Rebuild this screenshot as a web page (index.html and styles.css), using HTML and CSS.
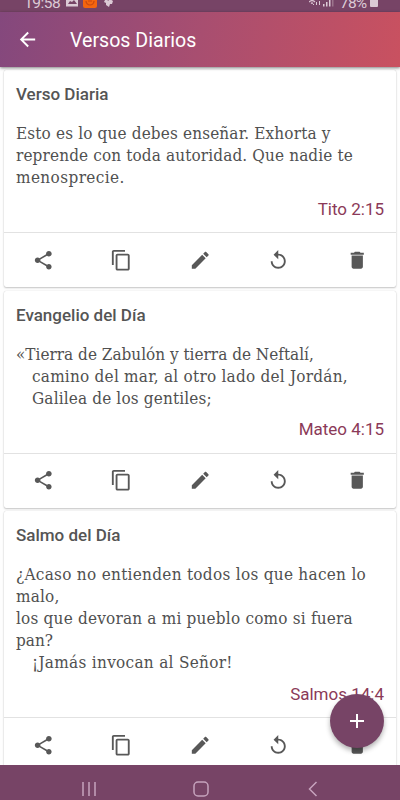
FILE: index.html
```html
<!DOCTYPE html>
<html lang="es">
<head>
<meta charset="utf-8">
<title>Versos Diarios</title>
<link rel="stylesheet" href="styles.css">
</head>
<body>
<svg class="defs" aria-hidden="true">
  <symbol id="share" viewBox="0 0 24 24"><path d="M18 16.08c-.76 0-1.44.3-1.96.77L8.91 12.7c.05-.23.09-.46.09-.7s-.04-.47-.09-.7l7.05-4.11c.54.5 1.25.81 2.04.81 1.66 0 3-1.34 3-3s-1.34-3-3-3-3 1.34-3 3c0 .24.04.47.09.7L8.04 9.81C7.5 9.31 6.79 9 6 9c-1.66 0-3 1.34-3 3s1.34 3 3 3c.79 0 1.5-.31 2.04-.81l7.12 4.16c-.05.21-.08.43-.08.65 0 1.61 1.31 2.92 2.92 2.92s2.92-1.31 2.92-2.92-1.31-2.92-2.92-2.92z"/></symbol>
  <symbol id="copy" viewBox="0 0 24 24"><path d="M16 1H4c-1.1 0-2 .9-2 2v14h2V3h12V1zm3 4H8c-1.1 0-2 .9-2 2v14c0 1.1.9 2 2 2h11c1.1 0 2-.9 2-2V7c0-1.1-.9-2-2-2zm0 16H8V7h11v14z"/></symbol>
  <symbol id="edit" viewBox="0 0 24 24"><path d="M3 17.25V21h3.75L17.81 9.94l-3.75-3.75L3 17.25zM20.71 7.04c.39-.39.39-1.02 0-1.41l-2.34-2.34c-.39-.39-1.02-.39-1.41 0l-1.83 1.83 3.75 3.75 1.83-1.83z"/></symbol>
  <symbol id="replay" viewBox="0 0 24 24"><path d="M12 5V1L7 6l5 5V7c3.31 0 6 2.69 6 6s-2.69 6-6 6-6-2.69-6-6H4c0 4.42 3.58 8 8 8s8-3.58 8-8-3.58-8-8-8z"/></symbol>
  <symbol id="trash" viewBox="0 0 24 24"><path d="M6 19c0 1.1.9 2 2 2h8c1.1 0 2-.9 2-2V7H6v12zM19 4h-3.5l-1-1h-5l-1 1H5v2h14V4z"/></symbol>
</svg>
<div class="screen">
  <div class="status">
    <span class="clock">19:58</span>
    <svg class="status-left" viewBox="0 0 50 12"><path class="lit" fill-rule="evenodd" d="M1-5h12V6.500H1zM3 4h9L9 0 7 2 5 1z"/><rect x="18" y="-6" width="14" height="14" rx="2" fill="#f4650f"/><path d="M21 1a4 4 0 0 0 8 0M23 1h4" fill="none" stroke="#c84812" stroke-width="1.200"/><path class="lit" d="M40 0l2-1 1 2 2-2 3 2-1 3-2 0-1 3-3-2 0-2-2-1z"/></svg>
    <svg class="status-right" viewBox="0 0 28 12"><path d="M0 2q3-3 6 0M2 3.500q1-1 2 0" fill="none" stroke="#d9c3d1" stroke-width="1.200"/><path class="lit" d="M4 4h1v1H4zM7 2h1v3H7zM10 1h1v4h-1zM14 4h1.500v2.500H14zM17 2h1.500v4.500H17zM20 0h1.500v6.500H20z"/><path d="M23-2h1.500v8.500H23z" fill="#9c748c"/></svg>
    <span class="percent">78%</span>
    <span class="battery"></span>
  </div>
  <header class="appbar">
    <svg class="back" viewBox="0 0 24 24"><path d="M20 11H7.830l5.590-5.590L12 4l-8 8 8 8 1.410-1.410L7.830 13H20v-2z"/></svg>
    <h1>Versos Diarios</h1>
  </header>
  <main class="list">
    <article class="card">
      <div class="content">
        <h2>Verso Diaria</h2>
        <div class="verse">
          <p class="line a1">Esto es lo que debes enseñar. Exhorta y</p>
          <p class="line a2">reprende con toda autoridad. Que nadie te</p>
          <p class="line a3">menosprecie.</p>
        </div>
        <div class="ref">Tito 2:15</div>
      </div>
      <div class="actions"><svg><use href="#share"/></svg><svg><use href="#copy"/></svg><svg><use href="#edit"/></svg><svg><use href="#replay"/></svg><svg><use href="#trash"/></svg></div>
    </article>
    <article class="card">
      <div class="content">
        <h2>Evangelio del Día</h2>
        <div class="verse">
          <p class="line b1">«Tierra de Zabulón y tierra de Neftalí,</p>
          <p class="line indent b2">camino del mar, al otro lado del Jordán,</p>
          <p class="line indent b3">Galilea de los gentiles;</p>
        </div>
        <div class="ref">Mateo 4:15</div>
      </div>
      <div class="actions"><svg><use href="#share"/></svg><svg><use href="#copy"/></svg><svg><use href="#edit"/></svg><svg><use href="#replay"/></svg><svg><use href="#trash"/></svg></div>
    </article>
    <article class="card">
      <div class="content">
        <h2>Salmo del Día</h2>
        <div class="verse">
          <p class="line c1">¿Acaso no entienden todos los que hacen lo</p>
          <p class="line c2">malo,</p>
          <p class="line c3">los que devoran a mi pueblo como si fuera</p>
          <p class="line c4">pan?</p>
          <p class="line indent c5">¡Jamás invocan al Señor!</p>
        </div>
        <div class="ref">Salmos 14:4</div>
      </div>
      <div class="actions"><svg><use href="#share"/></svg><svg><use href="#copy"/></svg><svg><use href="#edit"/></svg><svg><use href="#replay"/></svg><svg><use href="#trash"/></svg></div>
    </article>
  </main>
  <nav class="navbar">
    <svg viewBox="0 0 18 18"><path d="M3 2v14M9 2v14M15 2v14"/></svg>
    <svg viewBox="0 0 18 18"><rect x="2" y="2" width="14" height="14" rx="4"/></svg>
    <svg viewBox="0 0 18 18"><path d="M12.500 2L5.500 9l7 7"/></svg>
  </nav>
  <button class="fab" aria-label="Añadir"><svg viewBox="0 0 24 24"><path d="M19 13h-6v6h-2v-6H5v-2h6V5h2v6h6v2z"/></svg></button>
</div>
</body>
</html>
```
FILE: styles.css
```css
* { box-sizing: border-box; margin: 0; padding: 0; }
body { font-family: Roboto, sans-serif; background: #fff; overflow: hidden; }
.defs { display: none; }
.screen { position: relative; width: 400px; height: 800px; display: flex; flex-direction: column; overflow: hidden; }
.status { height: 12px; flex: none; background: #774466; display: flex; align-items: flex-start; padding-left: 24px; overflow: hidden; color: #dccad5; }
.clock, .percent { font-size: 15.500px; line-height: 18px; height: 18px; margin-top: -6.500px; }
.clock { width: 41px; letter-spacing: -0.5px; }
.status-left { width: 50px; height: 12px; }
.status-right { width: 28px; height: 12px; margin-left: 194px; }
.lit { fill: #dccad5; }
.percent { width: 31px; margin-left: 3px; letter-spacing: -0.8px; }
.battery { width: 8px; height: 7px; background: #dccad5; border-radius: 0 0 1px 1px; margin-left: -1px; }
.appbar { height: 55px; flex: none; display: flex; align-items: center; padding-left: 16px; background: linear-gradient(100deg, #84487d 0%, #a84e70 50%, #c95160 100%); box-shadow: 0 1px 3px rgba(0,0,0,.5); z-index: 1; }
.back { width: 23px; height: 23px; fill: #fff; }
h1 { font-size: 19.600px; font-weight: 400; color: #fff; margin-left: 31px; line-height: 24px; padding-top: 2px; }
.list { flex: 1; min-height: 0; overflow: hidden; padding: 3px 4px 0; display: flex; flex-direction: column; gap: 3.5px; background: #fefefe; }
.card { flex: none; background: #fff; border-radius: 2px; box-shadow: 0 1px 2px rgba(0,0,0,.22), 0 0 1px rgba(0,0,0,.2); }
.content { padding: 13.400px 12px 12px; height: 162px; display: flex; flex-direction: column; }
.card:last-child .content { height: 206px; }
h2 { font-size: 17px; line-height: 22px; font-weight: 500; color: #555; }
.verse { margin-top: 16.900px; font-family: "DejaVu Serif Condensed", "DejaVu Serif", serif; font-stretch: condensed; font-size: 17px; line-height: 22px; color: #505050; }
.line { white-space: nowrap; }
.indent { padding-left: 16px; }
.a1 { letter-spacing: .15px; }
.a2 { letter-spacing: .13px; }
.a3 { letter-spacing: .4px; }
.b2 { letter-spacing: .23px; }
.b3 { letter-spacing: .15px; }
.c1 { letter-spacing: .29px; }
.c2 { letter-spacing: .2px; }
.c3 { letter-spacing: .2px; }
.c5 { letter-spacing: .3px; }
.ref { margin-top: 9.500px; text-align: right; font-size: 17px; line-height: 22px; color: #8b3a58; }
.actions { height: 55px; border-top: 1px solid #e2e2e2; display: grid; grid-template-columns: repeat(5, 1fr); place-items: center; }
.actions svg { width: 22.500px; height: 22.500px; fill: #585858; }
.navbar { height: 35px; flex: none; background: #774466; display: flex; justify-content: space-between; align-items: flex-end; padding: 0 78px 2px 80px; z-index: 1; }
.navbar svg { width: 18px; height: 18px; fill: none; stroke: #c6a3bd; stroke-width: 1.500; }
.fab { position: absolute; left: 330px; top: 694px; width: 54px; height: 54px; border: 0; border-radius: 50%; background: #774466; box-shadow: 0 3px 5px rgba(0,0,0,.3); display: grid; place-items: center; z-index: 2; }
.fab svg { width: 24px; height: 24px; fill: #fff; }
```
